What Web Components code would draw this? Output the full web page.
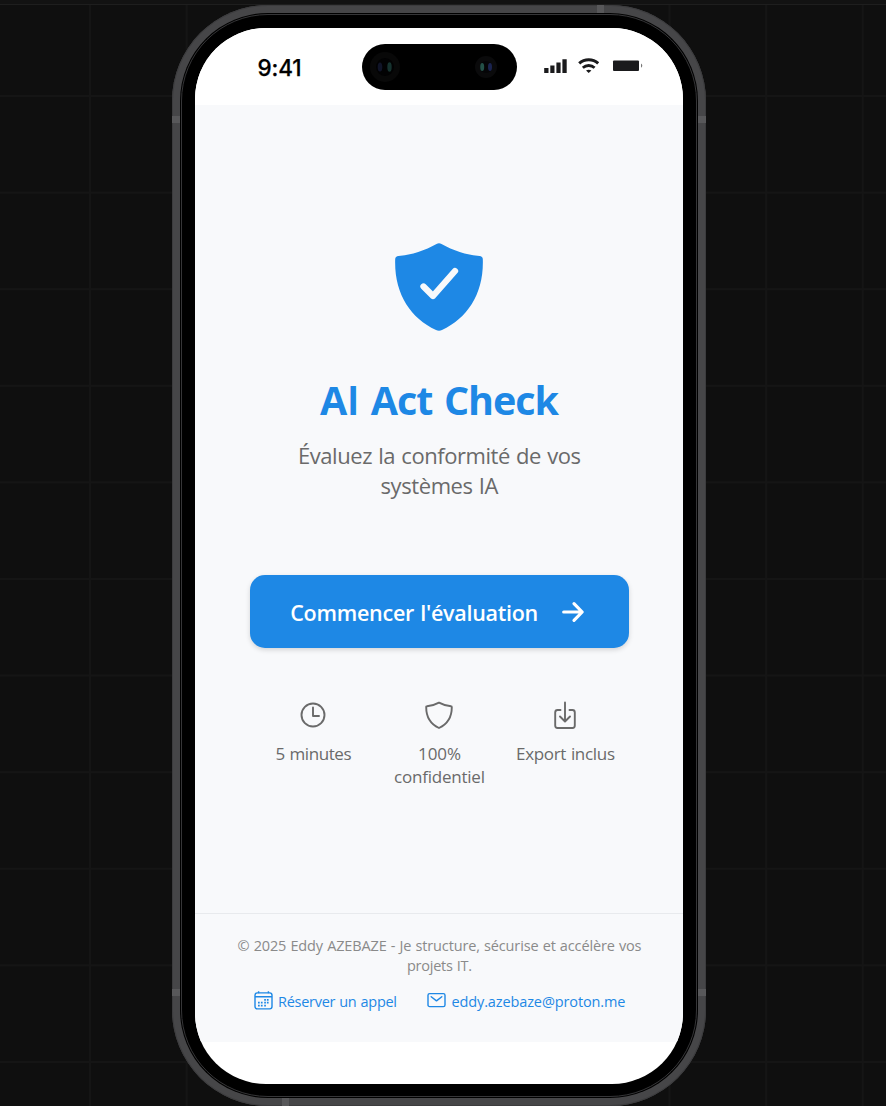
<!DOCTYPE html>
<html lang="fr">
<head>
<meta charset="utf-8">
<title>AI Act Check</title>
<style>
html,body{margin:0;height:100%;overflow:hidden;background:#0f0f0f}
body{font-family:"Open Sans","Noto Sans",sans-serif}
</style>
</head>
<body>
<device-stage>
  <phone-frame>
    <status-bar></status-bar>
    <welcome-screen></welcome-screen>
    <app-footer></app-footer>
  </phone-frame>
</device-stage>
<script>
const define = (name, html, after) => customElements.define(name, class extends HTMLElement {
  connectedCallback() {
    if (this.shadowRoot) return;
    const t = document.createElement('template');
    t.innerHTML = html;
    this.attachShadow({mode: 'open'}).append(t.content.cloneNode(true));
    if (after) after(this);
  }
});

/* A single line of text tracked to a given width */
define('text-line', `<style>
:host{display:block;white-space:nowrap;text-align:center;word-spacing:.04em}
span{display:inline-block}
</style><span><slot></slot></span>`, el => {
  const span = el.shadowRoot.querySelector('span');
  const target = parseFloat(el.getAttribute('width'));
  const n = el.textContent.length;
  const gap = (target - span.getBoundingClientRect().width) / (n - 1);
  span.style.letterSpacing = gap.toFixed(3) + 'px';
  span.style.marginRight = (-gap).toFixed(3) + 'px';
});

define('device-stage', `<style>
:host{display:flex;flex-direction:column;box-sizing:border-box;width:886px;height:1106px;padding:5px 0 0 172px;overflow:hidden;
background:linear-gradient(#121212 0 4px,#1e1e1e 4px 5px,transparent 5px),
linear-gradient(90deg,#151515 2px,transparent 2px) 89px 0/96.6px 100%,
linear-gradient(#151515 2px,transparent 2px) 0 95px/100% 96.6px,#0f0f0f}
</style><slot></slot>`);

define('phone-frame', `<style>
:host{display:block;position:relative;box-sizing:border-box;width:534px;height:1101px;border-radius:96px;background:#464648;padding:8px;box-shadow:inset 0 0 0 1px #3c3c3e}
.ring{box-sizing:border-box;height:100%;border-radius:88px;background:#000;padding:1px}
.edge{box-sizing:border-box;height:100%;border-radius:87px;border:1px solid #363638;padding:13px}
.screen{height:1056px;border-radius:71px;background:#fff;overflow:hidden;display:flex;flex-direction:column}
i{position:absolute;background:#58585a}
.l{left:0;width:8px;height:7px}.r{right:0;width:8px;height:7px}.a{top:111px}.b{top:984px}
.t{top:0;left:425px;width:7px;height:8px}.u{bottom:0;left:110px;width:7px;height:8px}
</style><i class="l a"></i><i class="r a"></i><i class="l b"></i><i class="r b"></i><i class="t"></i><i class="u"></i>
<div class="ring"><div class="edge"><div class="screen"><slot></slot></div></div></div>`);

define('status-bar', `<style>
:host{display:grid;grid-template-columns:167px 155px 1fr;height:77px;flex:none;background:#fff;color:#000}
.time{font:500 22.500px/28px Inter,sans-serif;-webkit-text-stroke:.25px #000;padding:26px 0 0 62.500px}
.island{margin-top:16px;height:46px;border-radius:23px;background:#000;display:flex;justify-content:space-between;align-items:center;padding:0 20px 0 8px;box-sizing:border-box}
svg{display:block}
.icons{padding:29px 0 0 27px}
</style>
<text-line class="time" width="44" style="text-align:left">9:41</text-line>
<div class="island">
<svg width="30" height="30" viewBox="0 0 30 30"><circle cx="15" cy="15" r="15" fill="#080808"/><circle cx="15" cy="15" r="9" fill="#020203"/><ellipse cx="10" cy="15" rx="2.300" ry="4.500" fill="#101428"/><ellipse cx="19.500" cy="15" rx="2.200" ry="4.700" fill="#16332f"/></svg>
<svg width="22" height="22" viewBox="0 0 22 22"><circle cx="11" cy="11" r="11" fill="#0a0a0b"/><circle cx="11" cy="11" r="6" fill="#050507"/><ellipse cx="7.200" cy="11" rx="2" ry="4" fill="#245148"/><ellipse cx="15" cy="11" rx="2" ry="4" fill="#1b2450"/></svg>
</div>
<svg class="icons" width="100" height="18" viewBox="0 0 100 18" fill="#1a1a1c">
<path d="M.2 11h4.300v5H.2zM6.300 8.500h4.200V16H6.300zM12.400 5.500h4.200V16h-4.200zM18.400 2.200h4.300V16h-4.300z"/>
<g fill="none" stroke="#1a1a1c" stroke-width="3"><path d="M35.200 6.400a14 14 0 0 1 19 0"/><path d="M38.800 10.700a9 9 0 0 1 11.800 0" stroke-width="2.800"/></g><path d="M42 13.600q2.700-1.800 5.400 0L44.700 16z"/>
<rect x="69" y="3.500" width="26" height="10.500" rx="1"/><path d="M97 6.500q2.600 2.200 0 4.300z" fill="#777"/>
</svg>`);

define('app-icon', `<style>:host{display:block}svg{display:block;overflow:visible}</style><div></div>`, el => {
  const icons = {
    shield: `<svg width="88" height="88" viewBox="0 0 88 88"><path d="M41.500 1Q44-.3 46.500 1C58 7.500 71 11.800 84.500 13Q87.600 13.300 87.800 16C89 50 73 75 47 87Q44 88.500 41 87C15 75-1 50 .2 16Q.4 13.300 3.500 13C17 11.800 30 7.500 41.500 1Z" fill="#1e88e5"/><path d="m28.500 43.500 9.500 9.500L60 28" fill="none" stroke="#f8f9fb" stroke-width="6.300" stroke-linecap="round" stroke-linejoin="round"/></svg>`,
    arrow: `<svg width="22" height="20" viewBox="0 0 22 20" fill="none" stroke="#fff" stroke-width="3.200" stroke-linecap="round" stroke-linejoin="round"><path d="M1.700 10h18M12 1.700 20.200 10 12 18.300"/></svg>`,
    clock: `<svg width="26" height="28" viewBox="0 0 26 28" fill="none" stroke="#6a6a6a" stroke-width="1.900" stroke-linecap="round" stroke-linejoin="round"><circle cx="13" cy="14" r="11.500"/><path d="M13 6.500V15h6"/></svg>`,
    guard: `<svg width="28" height="28" viewBox="0 0 28 28" fill="none" stroke="#6a6a6a" stroke-width="1.900" stroke-linejoin="round"><path d="M14 1.700C10.300 3.800 6 4.900 2 5.200Q1.200 5.200 1.200 6.200C1.200 16 5.500 23 14 27 22.500 23 26.800 16 26.800 6.200Q26.800 5.200 26 5.200C22 4.900 17.700 3.800 14 1.700Z"/></svg>`,
    export: `<svg width="22" height="28" viewBox="0 0 22 28" fill="none" stroke="#6a6a6a" stroke-width="1.900" stroke-linecap="round" stroke-linejoin="round"><path d="M6.500 9H3.500Q1.200 9 1.200 11.500V24.500Q1.200 27 3.500 27H18.500Q20.800 27 20.800 24.500V11.500Q20.800 9 18.500 9H15.500M11 1.500V20M6 15.500l5 5 5-5"/></svg>`,
    calendar: `<svg width="19" height="19" viewBox="0 0 19 19" fill="none" stroke="#1e88e5" stroke-width="1.400"><rect x="1" y="1.900" width="17" height="16" rx="2.300"/><path d="M1 5.700h17M4.600.2v2M14.400.2v2"/><path d="M10.200 8.800h1.700m1 0h1.700M4 11.700h1.700m1.200 0h1.700m1.600 0h1.700m1 0h1.700M4 14.700h1.700m1.200 0h1.700m1.600 0h1.700" stroke-width="1.700"/></svg>`,
    mail: `<svg width="19" height="19" viewBox="0 0 19 19" fill="none" stroke="#1e88e5" stroke-width="1.400" stroke-linejoin="round" stroke-linecap="round"><rect x="1" y="2.600" width="17" height="13" rx="1.700"/><path d="m4.200 5.700 5.300 4.200 5.300-4.200"/></svg>`
  };
  el.shadowRoot.querySelector('div').innerHTML = icons[el.getAttribute('name')];
});

define('feature-item', `<style>:host{display:flex;flex-direction:column;align-items:center;width:126px;gap:13px;color:#6a6a6a;font-size:17px;line-height:23px}
::slotted(app-icon){margin-right:1px}</style><slot></slot>`);

define('start-button', `<style>
button{all:unset;box-sizing:border-box;display:flex;align-items:center;width:378.500px;height:73px;padding:0 44.500px 0 40px;justify-content:space-between;border-radius:15px;background:#1e88e5;color:#fff;font:600 21.500px/30px "Open Sans",sans-serif;box-shadow:0 2px 5px rgba(0,0,0,.15)}
text-line{padding-top:2px}
</style><button><text-line width="248">Commencer l'évaluation</text-line><app-icon name="arrow"></app-icon></button>`);

define('welcome-screen', `<style>
:host{display:flex;flex-direction:column;align-items:center;box-sizing:border-box;height:808px;flex:none;padding:138px 0 0 1px;background:#f8f9fb;color:#6a6a6a}
:host>app-icon,app-icon[name=shield]{margin-right:1px}
h1{margin:44px 0 15px;font:700 39.500px/50px "Open Sans",sans-serif;color:#1e88e5}
h1 text-line{word-spacing:2.500px}
h1 span{font-family:Lato,sans-serif;font-size:40px;line-height:1;margin:0 1px}
.sub{font-size:22px;line-height:30px}
start-button{display:block;margin:75px 0 53px}
.row{display:flex}
</style>
<app-icon name="shield"></app-icon>
<h1><text-line width="239">A<span>I</span> Act Check</text-line></h1>
<div class="sub"><text-line width="283">Évaluez la conformité de vos</text-line><text-line width="118">systèmes IA</text-line></div>
<start-button></start-button>
<div class="row">
<feature-item><app-icon name="clock"></app-icon><text-line width="76">5 minutes</text-line></feature-item>
<feature-item><app-icon name="guard"></app-icon><div><text-line width="43">100%</text-line><text-line width="91">confidentiel</text-line></div></feature-item>
<feature-item><app-icon name="export"></app-icon><text-line width="99">Export inclus</text-line></feature-item>
</div>`);

define('app-footer', `<style>
:host{display:block;box-sizing:border-box;height:129px;flex:none;border-top:1px solid #e8eaed;background:#f8f9fb;padding:22px 0 0 1px;font-size:14.500px;line-height:20.300px;color:#8a8a8a}
nav{display:flex;justify-content:center;gap:30px;margin-top:15px}
a{display:flex;gap:5.500px;color:#1e88e5;line-height:20px}
app-icon{margin-top:-1px}
</style>
<text-line width="404">© 2025 Eddy AZEBAZE - Je structure, sécurise et accélère vos</text-line>
<text-line width="65">projets IT.</text-line>
<nav><a><app-icon name="calendar"></app-icon><text-line width="119">Réserver un appel</text-line></a><a><app-icon name="mail"></app-icon><text-line width="174">eddy.azebaze@proton.me</text-line></a></nav>`);
</script>
</body>
</html>
